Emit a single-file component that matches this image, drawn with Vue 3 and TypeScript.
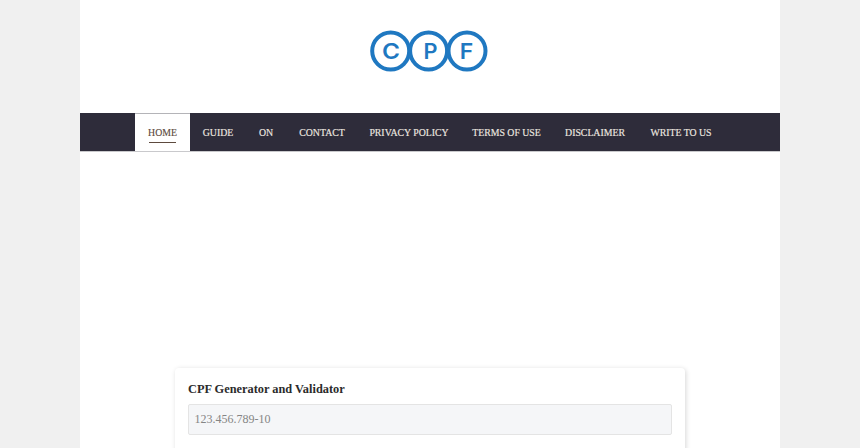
<script setup lang="ts">
interface NavLink { label: string; width: number }
const links: NavLink[] = [
  { label: 'HOME', width: 55 },
  { label: 'GUIDE', width: 56 },
  { label: 'ON', width: 40 },
  { label: 'CONTACT', width: 72 },
  { label: 'PRIVACY POLICY', width: 102 },
  { label: 'TERMS OF USE', width: 93 },
  { label: 'DISCLAIMER', width: 84 },
  { label: 'WRITE TO US', width: 88 },
]
</script>

<template>
  <div class="page">
    <header class="logo-wrap">
      <svg class="logo" width="118" height="44" viewBox="0 0 118 44" role="img" aria-label="CPF">
        <g fill="none" stroke="#1f78c1" stroke-width="4">
          <circle cx="20.7" cy="22" r="18.5" />
          <circle cx="58.6" cy="22" r="18.5" />
          <circle cx="97" cy="22" r="18.5" />
        </g>
        <g class="logo-text" fill="#1f78c1" text-anchor="middle">
          <text x="21" y="30.2" textLength="18" lengthAdjust="spacingAndGlyphs">C</text>
          <text x="60.5" y="30.2" textLength="14" lengthAdjust="spacingAndGlyphs">P</text>
          <text x="96.5" y="30.2" textLength="13.5" lengthAdjust="spacingAndGlyphs">F</text>
        </g>
      </svg>
    </header>
    <nav class="nav">
      <a
        v-for="(l, i) in links"
        :key="l.label"
        class="link"
        :class="{ active: i === 0 }"
        :style="{ width: l.width + 'px' }"
      ><span>{{ l.label }}</span></a>
    </nav>
    <main class="main">
      <section class="card">
        <h2>CPF Generator and Validator</h2>
        <div class="input">123.456.789-10</div>
      </section>
    </main>
  </div>
</template>

<style scoped>
.page {
  width: 700px;
  height: 448px;
  margin: 0 auto;
  background: #fff;
  overflow: hidden;
  font-family: "Liberation Serif", serif;
}
.logo-wrap {
  height: 113px;
  display: flex;
  justify-content: center;
  box-sizing: border-box;
  padding-top: 29px;
}
.logo { display: block; margin-left: -2px; }
.logo-text { font: 600 21.5px "Inter", sans-serif; }
.nav {
  height: 38px;
  background: #2e2c3a;
  display: flex;
  padding-left: 55px;
  border-bottom: 1px solid #c9c9cc;
}
.link {
  display: flex;
  align-items: center;
  justify-content: center;
  color: #efe9e0;
  font-size: 9.8px;
  white-space: nowrap;
  -webkit-text-stroke: 0.15px currentColor;
}
.link span {
  position: relative;
}
.link.active {
  background: #fff;
  color: #5d4a3e;
  box-shadow: inset 0 1px 0 #b4b4b8;
}
.link.active span::after {
  content: "";
  position: absolute;
  left: 1px;
  right: 1px;
  bottom: -5px;
  height: 1px;
  background: #5d4a3e;
}
.main {
  padding: 216px 95px 0;
}
.card {
  background: #fff;
  border-radius: 4px;
  box-shadow: 1px 1px 5px rgba(0, 0, 0, 0.16);
  padding: 13px 13px 20px;
  height: 200px;
  box-sizing: border-box;
}
h2 {
  margin: 0 0 7px;
  font-size: 12.35px;
  line-height: 16px;
  font-weight: 700;
  color: #2b2b2b;
}
.input {
  height: 31px;
  box-sizing: border-box;
  border: 1px solid #e4e4e4;
  border-radius: 2px;
  background: #f5f6f8;
  padding: 0 5.5px;
  display: flex;
  align-items: center;
  font-size: 12px;
  color: #858585;
}
</style>

<style>
body { background: #f0f0f0; margin: 0; }
</style>
